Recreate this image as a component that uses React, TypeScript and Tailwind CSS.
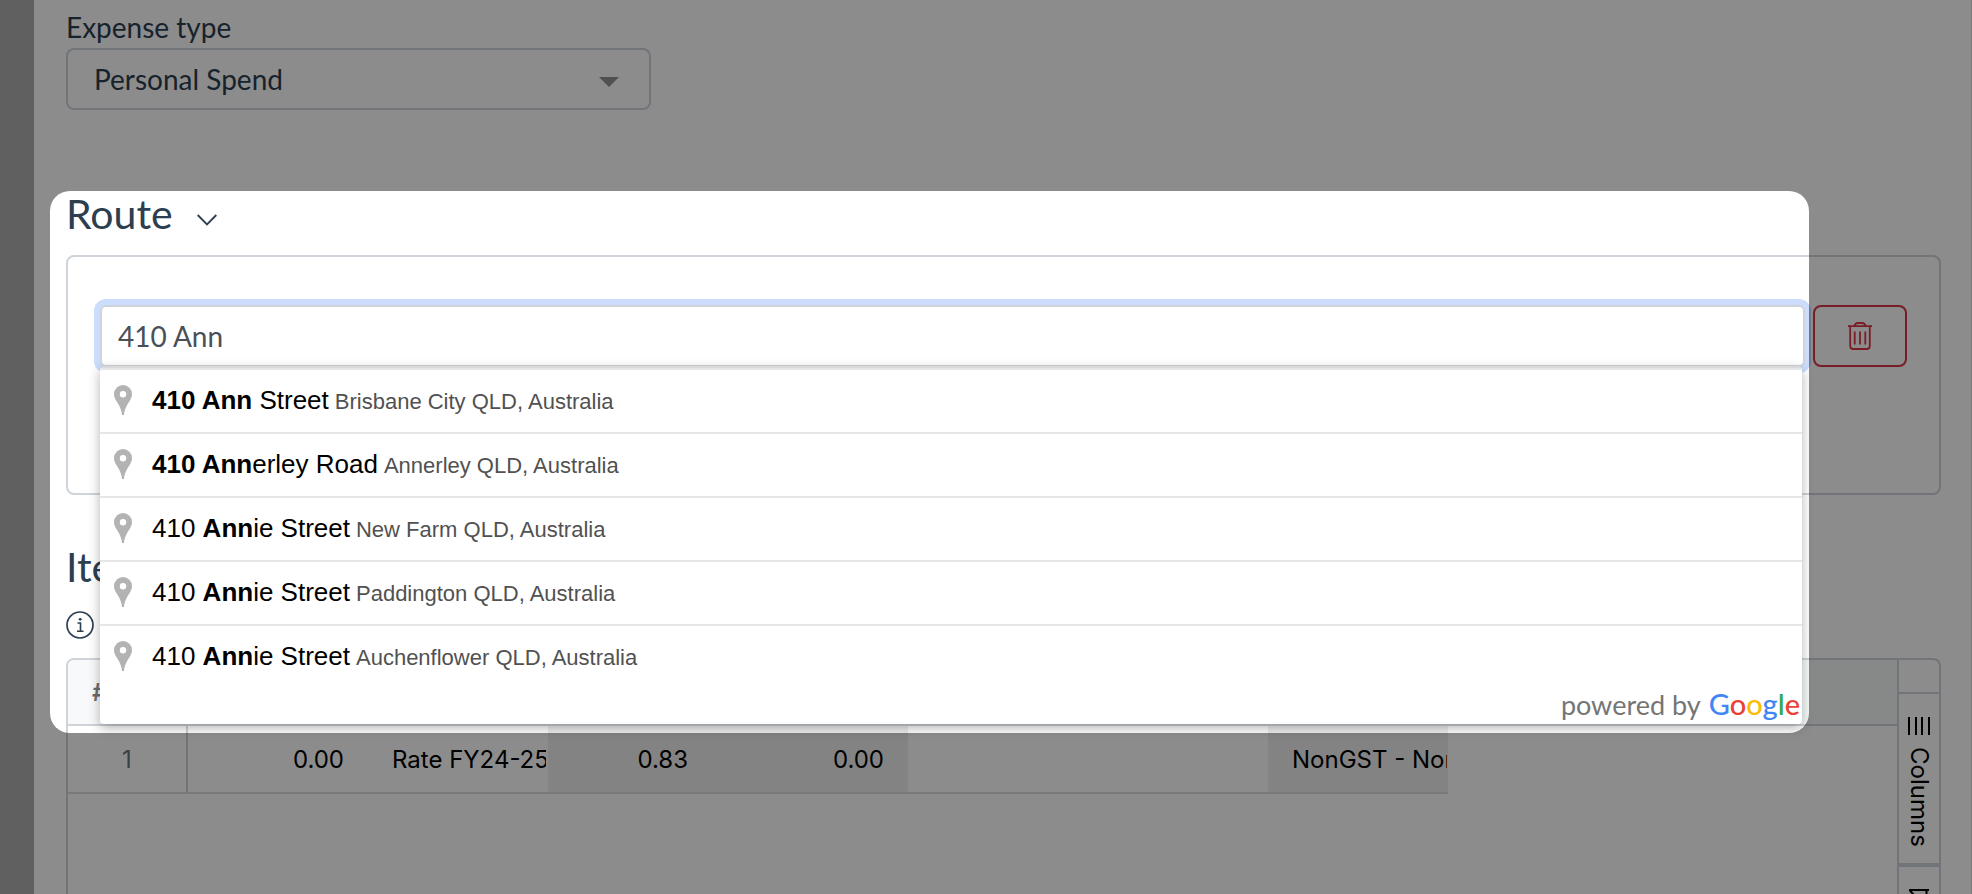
import React from "react";

type Prediction = { before?: string; match: string; after: string; area: string };

const predictions: Prediction[] = [
  { match: "410 Ann", after: " Street", area: "Brisbane City QLD, Australia" },
  { match: "410 Ann", after: "erley Road", area: "Annerley QLD, Australia" },
  { before: "410 ", match: "Ann", after: "ie Street", area: "New Farm QLD, Australia" },
  { before: "410 ", match: "Ann", after: "ie Street", area: "Paddington QLD, Australia" },
  { before: "410 ", match: "Ann", after: "ie Street", area: "Auchenflower QLD, Australia" },
];

function Pin() {
  return (
    <svg className="mr-5 h-[30px] w-[18px] shrink-0" viewBox="0 0 18 30" aria-hidden="true">
      <path
        fill="#b3b3b3"
        fillRule="evenodd"
        d="M9 0a9 9 0 0 1 9 9c0 3-1.300 5.300-3 8-2.400 3.700-4.300 7-5 13H8c-.7-6-2.600-9.300-5-13-1.700-2.700-3-5-3-8a9 9 0 0 1 9-9zm0 6a3.200 3.200 0 1 0 0 6.400A3.200 3.200 0 0 0 9 6z"
      />
    </svg>
  );
}

function Trash() {
  return (
    <svg className="h-7 w-6" viewBox="0 0 24 28" fill="none" stroke="#dc3545" strokeWidth="1.800" aria-hidden="true">
      <path d="M0 4.200h24M6.500 4C7 1.800 8.500 1 10 1h4c1.500 0 3 .8 3.500 3M2.200 4.500V24a3 3 0 0 0 3 3h13.600a3 3 0 0 0 3-3V4.500M6.700 9.500v13M12 9.500v13M17.300 9.500v13" />
    </svg>
  );
}

function Predictions() {
  return (
    <div className="absolute left-0 right-[3px] top-[61px] z-10 overflow-visible rounded-[4px] border-t-2 border-[#d9d9d9] bg-white font-['Liberation_Sans',Arial,sans-serif] shadow-[0_4px_12px_rgba(0,0,0,0.3)]">
      <ul role="listbox" aria-label="Address suggestions">
        {predictions.map((p) => (
          <li
            key={p.area}
            role="option"
            aria-selected="false"
            className="flex h-16 items-start border-t-2 border-[#e6e6e6] pl-3.5 pt-[15px] text-[22px] text-[#515151]"
          >
            <Pin />
            <p className="flex items-baseline gap-1.5 whitespace-pre leading-[30px]">
              <span className="text-[26px] text-black">
                {p.before}
                <b>{p.match}</b>
                {p.after}
              </span>
              <span>{p.area}</span>
            </p>
          </li>
        ))}
      </ul>
      <div className="flex h-9 items-baseline justify-end gap-2 pr-0.5 font-['Lato',sans-serif] leading-8">
        <span className="text-[27px] text-[#757575]">powered by</span>
        <span className="text-[29px] font-medium">
          <span className="text-[#4285f4]">G</span>
          <span className="text-[#ea4335]">o</span>
          <span className="text-[#fbbc04]">o</span>
          <span className="text-[#4285f4]">g</span>
          <span className="text-[#34a853]">l</span>
          <span className="text-[#ea4335]">e</span>
        </span>
      </div>
    </div>
  );
}

function ItemsGrid() {
  return (
    <div className="mt-[18px] flex min-h-0 flex-1 rounded-t-lg border-2 border-b-0 border-[#ced4da] font-['Inter',sans-serif] text-[24px] text-black">
      <div className="min-w-0 flex-1 overflow-hidden rounded-tl-md">
        <div className="border-b-2 border-[#ced4da] bg-[#f4faf7]">
          <div className="h-16 w-[120px] bg-[#f8f9fb] pl-6 font-semibold leading-[66px] text-[#6c6c6c]">#</div>
        </div>
        <table className="w-[1380px] table-fixed border-separate border-spacing-0">
          <colgroup>
            <col className="w-[120px]" />
            <col className="w-[180px]" />
            <col className="w-[180px]" />
            <col className="w-[180px]" />
            <col className="w-[180px]" />
            <col className="w-[180px]" />
            <col className="w-[180px]" />
            <col className="w-[180px]" />
          </colgroup>
          <tbody>
            <tr className="h-[68px] [&>td]:border-b-2 [&>td]:border-b-[#dddddd] [&>td]:pt-0.5">
              <td className="border-r-2 border-r-[#ced4da] text-center text-[#6c757d]">1</td>
              <td className="pr-6 text-right">0.00</td>
              <td className="whitespace-nowrap pl-6">
                <div className="mr-0.5 overflow-hidden">Rate FY24-25</div>
              </td>
              <td className="bg-[#eeeeee] pr-10 text-right">0.83</td>
              <td className="bg-[#eeeeee] pr-6 text-right">0.00</td>
              <td />
              <td />
              <td className="whitespace-nowrap bg-[#eeeeee] pl-6">
                <div className="mr-px overflow-hidden">NonGST - NonGST</div>
              </td>
            </tr>
          </tbody>
        </table>
      </div>
      <div className="flex w-[42px] flex-col border-l-2 border-[#ced4da]">
        <div className="h-8 shrink-0" />
        <button
          type="button"
          className="flex h-[175px] shrink-0 flex-col items-center gap-3 border-y-2 border-b-4 border-[#ced4da] pt-[23px]"
        >
          <svg className="h-[18px] w-[22px] shrink-0" viewBox="0 0 22 18" stroke="#000" strokeWidth="2" aria-hidden="true">
            <path d="M1 0v18M8 0v18M14 0v18M21 0v18" />
          </svg>
          <span className="leading-6 [writing-mode:vertical-rl]">Columns</span>
        </button>
        <button type="button" aria-label="Filters" className="flex shrink-0 justify-center pt-[22px]">
          <svg className="h-[22px] w-[22px]" viewBox="0 0 22 22" fill="none" stroke="#000" strokeWidth="2" aria-hidden="true">
            <path d="M1 1h20M1.500 1l7 8v12M18.500 1v8l-4 4v8" />
          </svg>
        </button>
      </div>
    </div>
  );
}

export default function App() {
  return (
    <div className="relative flex h-screen overflow-hidden bg-white font-['Lato',sans-serif] text-[28px] text-[#2c3e50]">
      <aside className="w-[34px] shrink-0 bg-[#afafaf]" />
      <main className="flex min-w-0 flex-1 flex-col border-r border-[#dddddd] pl-8 pr-[30px] pt-1.5">
        <label htmlFor="expense-type" className="leading-[42px]">
          Expense type
        </label>
        <div className="relative w-[585px]">
          <select
            id="expense-type"
            className="h-[62px] w-full appearance-none rounded-lg border-2 border-[#ced4da] bg-white px-[26px]"
          >
            <option>Personal Spend</option>
          </select>
          <svg className="pointer-events-none absolute right-8 top-[29px] h-2.5 w-5" viewBox="0 0 20 10" aria-hidden="true">
            <path d="M0 0h20L10 10z" fill="#939393" />
          </svg>
        </div>

        <h2 className="mt-20 flex h-[65px] items-start gap-6 text-[41px] leading-[48px]">
          <span>Route</span>
          <svg className="mt-6 h-3 w-5" viewBox="0 0 20 12" fill="none" stroke="currentColor" strokeWidth="1.800" aria-hidden="true">
            <path d="M.7 1 10 10.500 19.300 1" />
          </svg>
        </h2>
        <section className="flex h-60 items-start gap-2 rounded-lg border-2 border-[#ced4da] py-12 pl-8 pr-8">
          <div className="relative min-w-0 flex-1">
            <input
              type="text"
              aria-label="Address"
              defaultValue="410 Ann"
              className="block h-[62px] w-full rounded-md border-2 border-[#ced4da] bg-white px-4 text-[#495057] shadow-[0_0_0_6px_#cbdcfd] outline-none"
            />
            <Predictions />
          </div>
          <button
            type="button"
            aria-label="Delete stop"
            className="flex h-[62px] w-[94px] items-center justify-center rounded-lg border-2 border-[#dc3545]"
          >
            <Trash />
          </button>
        </section>

        <h2 className="mt-12 text-[41px] leading-[48px]">Items</h2>
        <div className="mt-5 flex h-7 shrink-0 items-center">
          <svg className="h-7 w-7" viewBox="0 0 28 28" fill="none" stroke="currentColor" aria-hidden="true">
            <circle cx="14" cy="14" r="13" strokeWidth="1.700" />
            <path d="M11.500 12h3v8.200M11 20.300h6.500" strokeWidth="1.600" />
            <circle cx="14.200" cy="8.300" r="1.400" fill="currentColor" stroke="none" />
          </svg>
        </div>
        <div className="h-px shrink-0" />
        <ItemsGrid />
      </main>
      <div className="pointer-events-none absolute left-[50px] right-[163px] top-[191px] z-20 h-[542px] rounded-[20px] shadow-[0_0_0_2000px_rgba(0,0,0,0.45)]" />
    </div>
  );
}
